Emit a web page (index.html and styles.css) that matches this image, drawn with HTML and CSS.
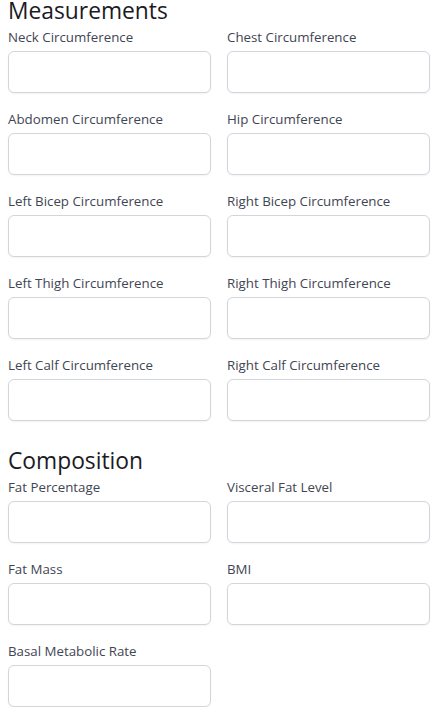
FILE: index.html
```html
<!DOCTYPE html>
<html>
<head>
<meta charset="utf-8">
<link rel="stylesheet" href="styles.css">
</head>
<body>
<div class="page">
  <section class="section">
    <h2 class="section-title">Measurements</h2>
    <div class="grid">
      <div class="field"><label class="label">Neck Circumference</label><input class="input" type="text"></div>
      <div class="field"><label class="label">Chest Circumference</label><input class="input" type="text"></div>
      <div class="field"><label class="label">Abdomen Circumference</label><input class="input" type="text"></div>
      <div class="field"><label class="label">Hip Circumference</label><input class="input" type="text"></div>
      <div class="field"><label class="label">Left Bicep Circumference</label><input class="input" type="text"></div>
      <div class="field"><label class="label">Right Bicep Circumference</label><input class="input" type="text"></div>
      <div class="field"><label class="label">Left Thigh Circumference</label><input class="input" type="text"></div>
      <div class="field"><label class="label">Right Thigh Circumference</label><input class="input" type="text"></div>
      <div class="field"><label class="label">Left Calf Circumference</label><input class="input" type="text"></div>
      <div class="field"><label class="label">Right Calf Circumference</label><input class="input" type="text"></div>
    </div>
  </section>
  <section class="section section-next">
    <h2 class="section-title">Composition</h2>
    <div class="grid">
      <div class="field"><label class="label">Fat Percentage</label><input class="input" type="text"></div>
      <div class="field"><label class="label">Visceral Fat Level</label><input class="input" type="text"></div>
      <div class="field"><label class="label">Fat Mass</label><input class="input" type="text"></div>
      <div class="field"><label class="label">BMI</label><input class="input" type="text"></div>
      <div class="field"><label class="label">Basal Metabolic Rate</label><input class="input" type="text"></div>
    </div>
  </section>
</div>
</body>
</html>
```
FILE: styles.css
```css
html, body {
  margin: 0;
  padding: 0;
  background: #ffffff;
}
body {
  font-family: "Open Sans", "Noto Sans", sans-serif;
}
.page {
  padding: 0 8px;
}
.section-title {
  margin: 0 0 5px 0;
  font-size: 22.8px;
  line-height: 22px;
  font-weight: 400;
  color: #1b1b1f;
}
.section-next {
  margin-top: 29px;
}
.grid {
  display: grid;
  grid-template-columns: 1fr 1fr;
  column-gap: 16px;
  row-gap: 16px;
}
.field {
  display: flex;
  flex-direction: column;
  gap: 4px;
}
.label {
  font-size: 13.3px;
  line-height: 20px;
  color: #3f4653;
}
.input {
  box-sizing: border-box;
  height: 42px;
  width: 100%;
  margin: 0;
  border: 1px solid #d3d5dc;
  border-radius: 6px;
  background: #fff;
  box-shadow: 0 1px 2px rgba(0,0,0,0.05);
  font: inherit;
  padding: 0 12px;
}
```
